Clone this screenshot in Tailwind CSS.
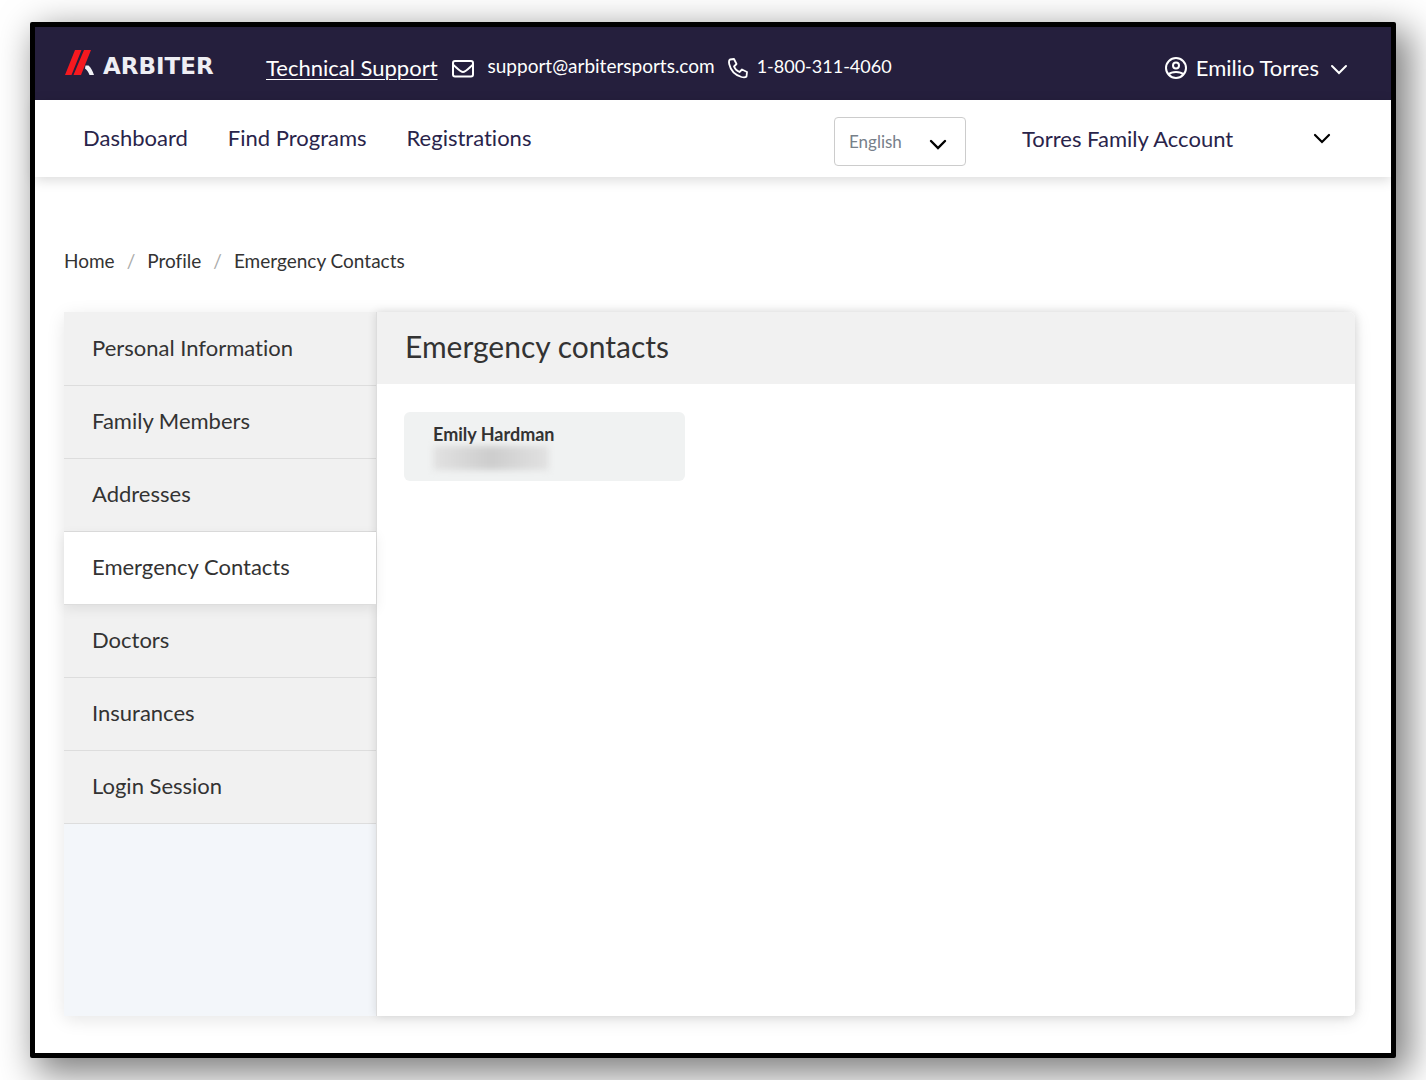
<!DOCTYPE html>
<html lang="en">
<head>
<meta charset="utf-8">
<meta name="viewport" content="width=device-width, initial-scale=1">
<title>Emergency Contacts</title>
<script src="https://cdn.jsdelivr.net/npm/@tailwindcss/browser@4"></script>
</head>
<body class="flex min-h-screen flex-col overflow-x-hidden bg-white px-[30px] py-[22px] font-[Lato,sans-serif] text-[#333333] [font-variant-ligatures:none]">
<div class="flex flex-1 flex-col rounded-xs border-5 border-black bg-white shadow-[10px_12px_36px_4px_rgba(0,0,0,0.5)]">
  <header class="flex h-[73px] items-center bg-[#251f3d] pr-10 pl-[30px] text-[22px] leading-7 text-white">
    <a href="#" class="flex w-[201px] shrink-0 items-center gap-2">
      <svg width="30" height="28" viewBox="0 0 30 28" class="block">
        <path d="M10 0h6.500L6.500 25H0z M19 0h7L16 25H8.500z" fill="#f5191f"/>
        <path d="M20.500 15.500h3c2.500 2 4 5.500 5.500 9.500h-4.500c-1-3-2.500-5-4.500-6.500z" fill="#f1f1f6"/>
      </svg>
      <span class="pt-1 font-['DejaVu_Sans',sans-serif] text-[23px] leading-6 font-bold text-[#eeeef4]">ARBITER</span>
    </a>
    <a href="#" class="mt-2 underline decoration-1 underline-offset-3">Technical Support</a>
    <a href="#" class="mt-2 ml-[13px] flex items-center gap-[13px] text-[19px]">
      <svg width="24" height="22" viewBox="0 0 24 22" fill="none" stroke="currentColor" stroke-width="2" stroke-linejoin="round"><rect x="2" y="4" width="20" height="15.500" rx="2"/><path d="M2.500 8c3 2.500 7 7 9.500 7s6.500-4.500 9.500-7"/></svg>
      <span class="pb-1">support@arbitersports.com</span>
    </a>
    <a href="#" class="mt-2 ml-3 flex items-center gap-2 text-lg">
      <svg width="22" height="23" viewBox="0 0 22 23" fill="none" stroke="currentColor" stroke-width="1.800" stroke-linejoin="round"><path d="M3 3.500 7 3l2.500 5L7 10.500c1 2.500 3 4.500 5.500 5.500l2.500-2.500 5 2.500-.5 4.500c-1 1-3 1-5 .5C8 19 3.500 14 2.200 8c-.4-2 0-4 .8-4.500z"/></svg>
      <span class="pb-1">1-800-311-4060</span>
    </a>
    <button type="button" class="mt-2 ml-auto flex items-center gap-2">
      <svg width="24" height="24" viewBox="0 0 24 24" fill="none" stroke="currentColor" stroke-width="2"><circle cx="12" cy="12" r="10"/><circle cx="12" cy="9.500" r="3"/><path d="M4.500 18.500c2-2 4.500-2.500 7.500-2.500s5.500.5 7.500 2.500"/></svg>
      <span>Emilio Torres</span>
      <svg width="24" height="24" viewBox="0 0 24 24" fill="none" stroke="currentColor" stroke-width="2" stroke-linecap="round"><path d="m5 10 7 7 7-7"/></svg>
    </button>
  </header>

  <nav class="flex h-[77px] items-center bg-white pr-[57px] pl-12 text-[22px] leading-7 text-[#29244a] shadow-[0_3px_12px_rgba(0,0,0,0.15)]">
    <div class="flex gap-10 pb-0.5">
      <a href="#">Dashboard</a>
      <a href="#">Find Programs</a>
      <a href="#">Registrations</a>
    </div>
    <div class="relative mt-1.5 ml-auto">
      <select aria-label="Language" class="block h-[49px] w-[132px] appearance-none rounded-sm border border-[#cccccc] bg-white px-[14px] text-[17px] text-[#77808a]"><option>English</option></select>
      <svg class="pointer-events-none absolute top-4 right-4 text-black" width="24" height="24" viewBox="0 0 24 24" fill="none" stroke="currentColor" stroke-width="2.400" stroke-linecap="round"><path d="m5 8 7 7 7-7"/></svg>
    </div>
    <button type="button" class="ml-14 flex w-[312px] items-center justify-between">
      <span>Torres Family Account</span>
      <svg class="text-black" width="24" height="24" viewBox="0 0 24 24" fill="none" stroke="currentColor" stroke-width="2.200" stroke-linecap="round"><path d="m5 8 7 7 7-7"/></svg>
    </button>
  </nav>

  <main class="flex flex-1 flex-col pt-[72px] pr-9 pb-[37px] pl-[29px]">
    <ol class="flex gap-3 text-[19px] leading-6">
      <li><a href="#">Home</a></li>
      <li aria-hidden="true" class="text-[#aaaaaa]">/</li>
      <li><a href="#">Profile</a></li>
      <li aria-hidden="true" class="text-[#aaaaaa]">/</li>
      <li>Emergency Contacts</li>
    </ol>

    <div class="mt-[39px] flex flex-1 rounded-md shadow-[0_4px_18px_rgba(0,0,0,0.1)]">
      <aside class="w-[312px] shrink-0 bg-[#f3f6fa] text-[22px] leading-7">
        <ul class="border-t border-[#f1f1f1]">
          <li><a href="#" class="flex h-[73px] items-center border-b border-[#dddddd] bg-[#f1f1f1] px-7 pb-0.5">Personal Information</a></li>
          <li><a href="#" class="flex h-[73px] items-center border-b border-[#dddddd] bg-[#f1f1f1] px-7 pb-0.5">Family Members</a></li>
          <li><a href="#" class="flex h-[73px] items-center border-b border-[#dddddd] bg-[#f1f1f1] px-7 pb-0.5">Addresses</a></li>
          <li><a href="#" aria-current="page" class="relative flex h-[73px] items-center border-b border-[#dddddd] bg-white px-7 pb-0.5 shadow-[0_4px_12px_rgba(0,0,0,0.08)]">Emergency Contacts</a></li>
          <li><a href="#" class="flex h-[73px] items-center border-b border-[#dddddd] bg-[#f1f1f1] px-7 pb-0.5">Doctors</a></li>
          <li><a href="#" class="flex h-[73px] items-center border-b border-[#dddddd] bg-[#f1f1f1] px-7 pb-0.5">Insurances</a></li>
          <li><a href="#" class="flex h-[73px] items-center border-b border-[#dddddd] bg-[#f1f1f1] px-7 pb-0.5">Login Session</a></li>
        </ul>
      </aside>
      <section class="flex-1 rounded-r-md border-l border-[#dddddd] bg-white shadow-[0_0_10px_rgba(0,0,0,0.12)]">
        <h1 class="flex h-[72px] items-center rounded-tr-md bg-[#f1f1f1] px-7 pb-1 text-[30px]">Emergency contacts</h1>
        <div class="p-7 pl-[27px]">
          <div class="h-[69px] w-[281px] rounded-md bg-[#f0f2f2] px-[29px] pt-[10px]">
            <p class="text-lg leading-6 font-bold">Emily Hardman</p>
            <div class="h-6 w-[116px] bg-linear-to-r from-[#e2e2e2] via-[#cdcdcd] to-[#e2e2e2] blur-[3px]"></div>
          </div>
        </div>
      </section>
    </div>
  </main>
</div>
</body>
</html>
